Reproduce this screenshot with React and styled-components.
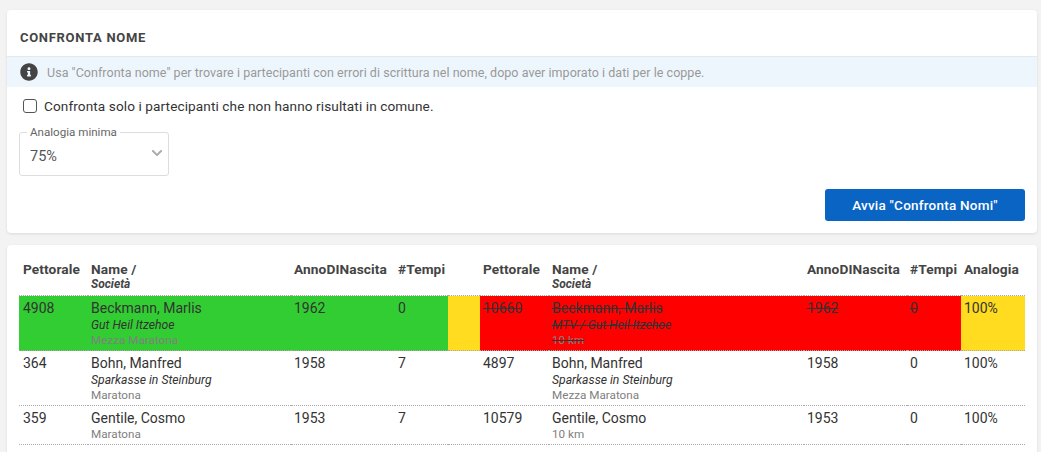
import React from "react";
import styled, { createGlobalStyle } from "styled-components";
import { FaInfoCircle, FaChevronDown } from "react-icons/fa";

const GlobalStyle = createGlobalStyle`
  html, body {
    margin: 0;
    height: 452px;
    overflow: hidden;
    background: #f3f3f3;
    font-family: Roboto, "Liberation Sans", sans-serif;
    color: #333;
  }
`;

const Page = styled.div`
  padding: 10px 4px 0 7px;
  display: flex;
  flex-direction: column;
  gap: 12px;
`;

const Card = styled.div`
  background: #fff;
  border-radius: 4px;
  box-shadow: 0 1px 3px rgba(0, 0, 0, 0.1);
`;

const Title = styled.h2`
  margin: 0;
  padding: 0 13px 10px;
  display: flex;
  align-items: flex-end;
  box-sizing: border-box;
  height: 47px;
  border-bottom: 1px solid #e6e9ec;
  font-size: 13px;
  line-height: 16px;
  font-weight: 700;
  letter-spacing: 0.7px;
  color: #444;
`;

const InfoBar = styled.div`
  height: 30px;
  padding: 0 13px;
  display: flex;
  align-items: center;
  gap: 9px;
  background: #eef6fd;
  font-size: 12.5px;
  letter-spacing: 0.04px;
  color: #999;
  svg {
    color: #444;
    flex: none;
  }
`;

const CheckRow = styled.label`
  display: flex;
  align-items: center;
  gap: 7px;
  margin: 10px 0 0 16px;
  height: 18px;
  font-size: 13.6px;
  letter-spacing: 0.1px;
  color: #333;
`;

const Check = styled.input`
  appearance: none;
  margin: 0;
  width: 14px;
  height: 14px;
  border: 1px solid #555;
  border-radius: 3px;
  background: #fff;
`;

const SelectBox = styled.fieldset`
  position: relative;
  box-sizing: border-box;
  width: 150px;
  height: 51px;
  margin: 10px 0 0 12px;
  padding: 0 10px;
  border: 1px solid #ddd;
  border-radius: 3px;
  legend {
    padding: 0 3px;
    margin-left: -3px;
    font-size: 11.6px;
    line-height: 14px;
    color: #666;
  }
`;

const SelectValue = styled.div`
  font-size: 14.5px;
  line-height: 20px;
  margin-top: 8px;
  color: #555;
`;

const Chevron = styled(FaChevronDown)`
  position: absolute;
  right: 5px;
  top: 8px;
  color: #aaa;
`;

const Actions = styled.div`
  display: flex;
  justify-content: flex-end;
  padding: 13px 12px 12px;
`;

const StartButton = styled.button`
  width: 200px;
  height: 32px;
  border: 0;
  border-radius: 3px;
  background: #0964c4;
  color: #fff;
  font-family: inherit;
  font-size: 13.5px;
  font-weight: 500;
  letter-spacing: 0.22px;
`;

const TableCard = styled(Card)`
  padding: 11px 12px 8px;
  border-radius: 4px 4px 0 0;
`;

const Table = styled.table`
  width: 1006px;
  table-layout: fixed;
  border-collapse: collapse;
  font-size: 14px;
  color: #333;
`;

const Th = styled.th`
  padding: 5px 3px 4px;
  box-sizing: border-box;
  vertical-align: top;
  text-align: left;
  font-weight: 700;
  font-size: 13.7px;
  line-height: 16px;
  letter-spacing: 0.1px;
  color: #444;
  border-bottom: 1px dotted #aaa;
  &:first-child {
    padding-left: 4px;
  }
  small {
    display: block;
    font-size: 12px;
    line-height: 14px;
    font-style: italic;
    font-weight: 700;
    letter-spacing: 0;
  }
`;

const tones = { green: "#32cd32", red: "#ff0000", yellow: "#ffdc20" };

const Td = styled.td`
  padding: 4px 3px 2px;
  vertical-align: top;
  line-height: 17px;
  border-bottom: 1px dotted #aaa;
  background: ${(p) => tones[p.$tone] || "transparent"};
  text-decoration: ${(p) => (p.$struck ? "line-through" : "none")};
  &:first-child {
    padding-left: 4px;
  }
`;

const Club = styled.div`
  font-size: 12.2px;
  line-height: 15px;
  font-style: italic;
  margin-top: 1px;
`;

const Race = styled.div`
  font-size: 11.7px;
  line-height: 15px;
  color: #808080;
`;

const columns = [69, 203, 104, 53, 32, 69, 255, 103, 54, 64];

const rows = [
  {
    key: "beckmann",
    highlight: true,
    left: { bib: "4908", name: "Beckmann, Marlis", club: "Gut Heil Itzehoe", race: "Mezza Maratona", year: "1962", times: "0" },
    right: { bib: "10660", name: "Beckmann, Marlis", club: "MTV / Gut Heil Itzehoe", race: "10 km", year: "1962", times: "0" },
  },
  {
    key: "bohn",
    left: { bib: "364", name: "Bohn, Manfred", club: "Sparkasse in Steinburg", race: "Maratona", year: "1958", times: "7" },
    right: { bib: "4897", name: "Bohn, Manfred", club: "Sparkasse in Steinburg", race: "Mezza Maratona", year: "1958", times: "0" },
  },
  {
    key: "gentile",
    left: { bib: "359", name: "Gentile, Cosmo", race: "Maratona", year: "1953", times: "7" },
    right: { bib: "10579", name: "Gentile, Cosmo", race: "10 km", year: "1953", times: "0" },
  },
];

function Participant({ data, tone, struck }) {
  return (
    <>
      <Td $tone={tone} $struck={struck}>{data.bib}</Td>
      <Td $tone={tone} $struck={struck}>
        {data.name}
        {data.club && <Club>{data.club}</Club>}
        <Race>{data.race}</Race>
      </Td>
      <Td $tone={tone} $struck={struck}>{data.year}</Td>
      <Td $tone={tone} $struck={struck}>{data.times}</Td>
    </>
  );
}

function HeaderGroup() {
  return (
    <>
      <Th>Pettorale</Th>
      <Th>
        Name /<small>Società</small>
      </Th>
      <Th>AnnoDINascita</Th>
      <Th>#Tempi</Th>
    </>
  );
}

export default function App() {
  return (
    <Page>
      <GlobalStyle />
      <Card>
        <Title>CONFRONTA NOME</Title>
        <InfoBar>
          <FaInfoCircle size={18} />
          Usa "Confronta nome" per trovare i partecipanti con errori di scrittura nel nome, dopo aver imporato i dati per le coppe.
        </InfoBar>
        <CheckRow>
          <Check type="checkbox" />
          Confronta solo i partecipanti che non hanno risultati in comune.
        </CheckRow>
        <SelectBox>
          <legend>Analogia minima</legend>
          <SelectValue>75%</SelectValue>
          <Chevron size={12} />
        </SelectBox>
        <Actions>
          <StartButton>Avvia "Confronta Nomi"</StartButton>
        </Actions>
      </Card>
      <TableCard>
        <Table>
          <colgroup>
            {columns.map((w, i) => (
              <col key={i} style={{ width: w }} />
            ))}
          </colgroup>
          <thead>
            <tr>
              <HeaderGroup />
              <Th />
              <HeaderGroup />
              <Th>Analogia</Th>
            </tr>
          </thead>
          <tbody>
            {rows.map((row) => (
              <tr key={row.key}>
                <Participant data={row.left} tone={row.highlight ? "green" : undefined} />
                <Td $tone={row.highlight ? "yellow" : undefined} />
                <Participant data={row.right} tone={row.highlight ? "red" : undefined} struck={row.highlight} />
                <Td $tone={row.highlight ? "yellow" : undefined}>100%</Td>
              </tr>
            ))}
          </tbody>
        </Table>
      </TableCard>
    </Page>
  );
}
